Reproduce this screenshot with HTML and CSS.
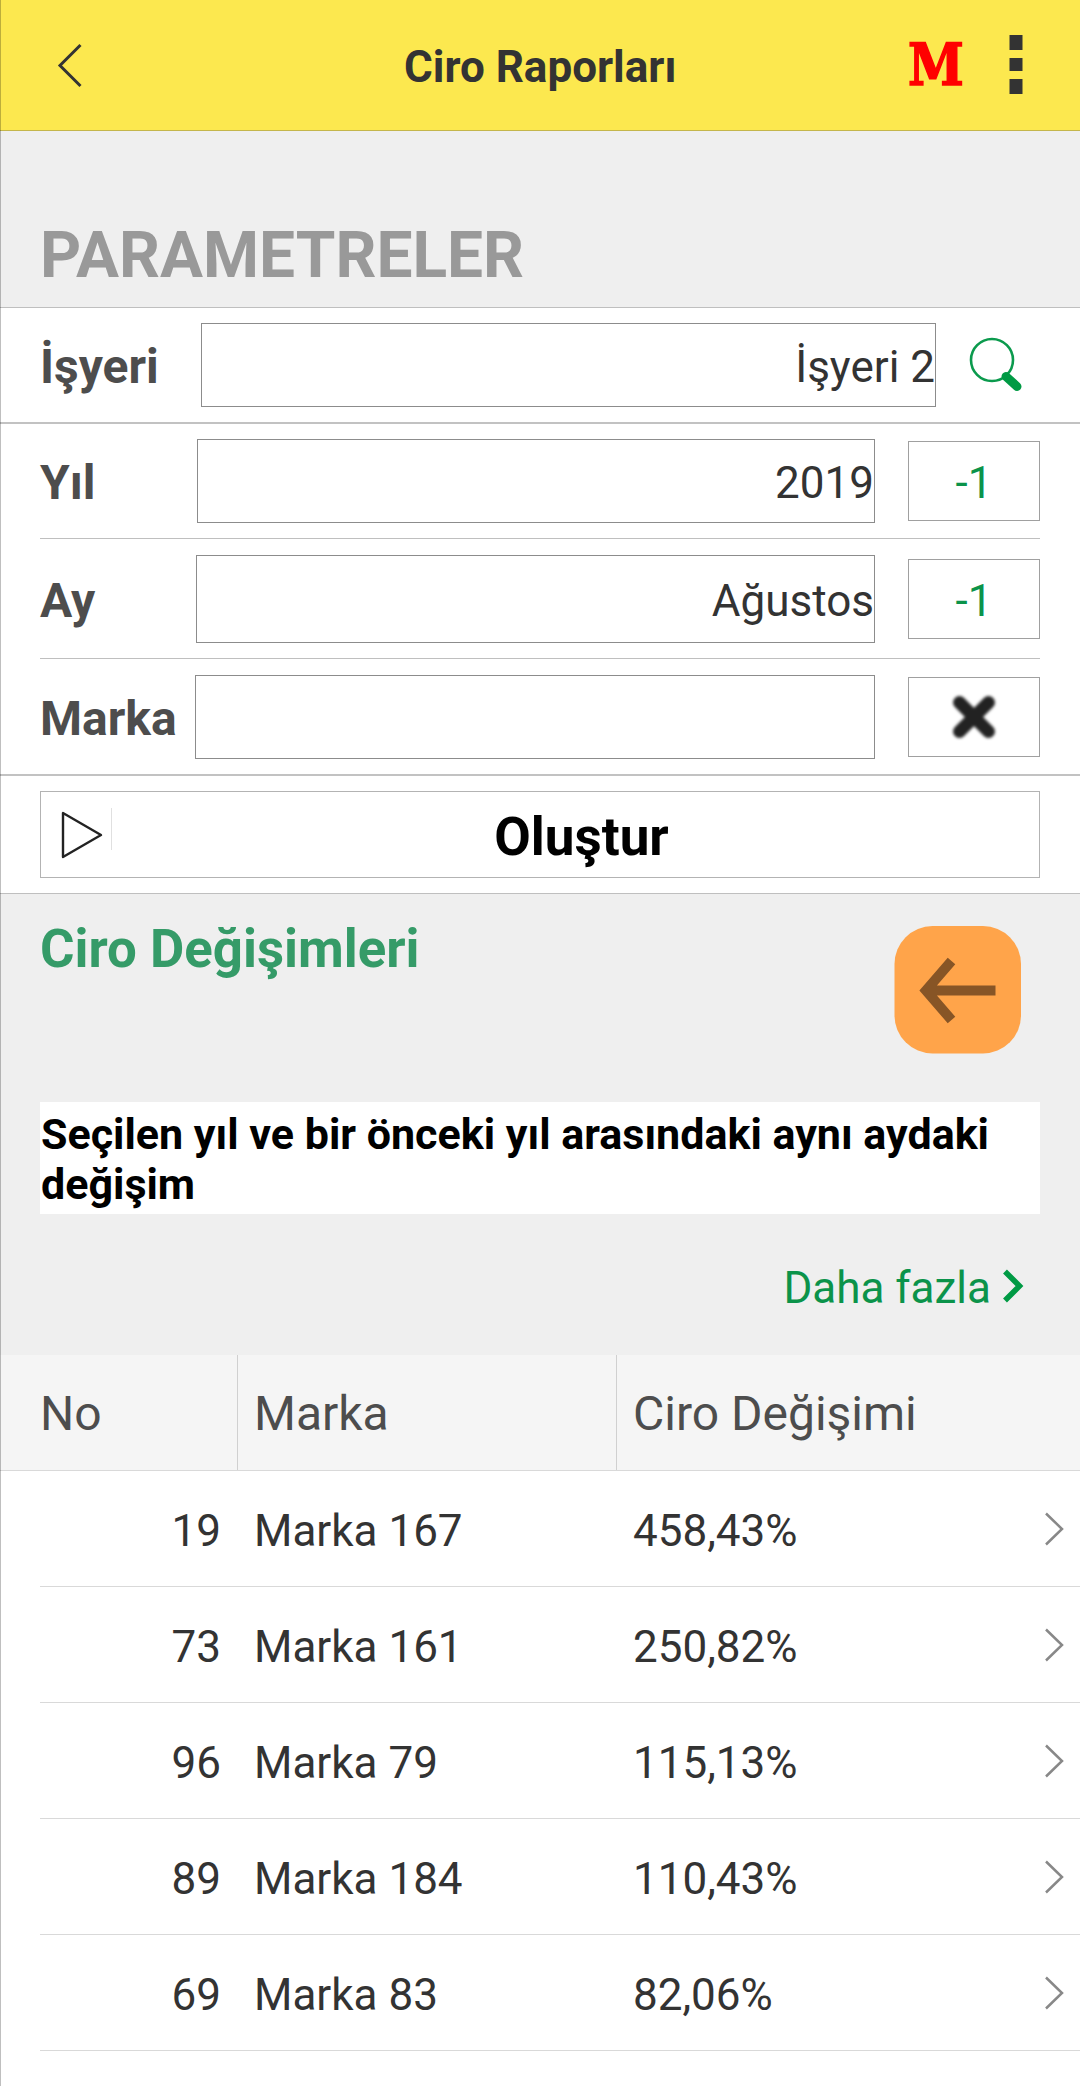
FILE: index.html
```html
<!DOCTYPE html>
<html lang="tr">
<head>
  <meta charset="UTF-8" />
  <meta name="viewport" content="width=device-width, initial-scale=1.0" />
  <title>Ciro Raporları</title>
  <link rel="stylesheet" href="styles.css">
</head>
<body>

  <header class="topbar">
    <svg class="back" width="28" height="48" viewBox="0 0 28 48">
      <path d="M25.5 4 L5 24.5 L25.5 45" fill="none" stroke="#333" stroke-width="3" />
    </svg>
    <h1 class="topbar-title">Ciro Raporları</h1>
    <span class="logo">M</span>
    <svg class="menu" width="14" height="60" viewBox="0 0 14 60" fill="#333">
      <rect x="0.5" y="0" width="13" height="15" />
      <rect x="0.5" y="23" width="13" height="13" />
      <rect x="0.5" y="44" width="13" height="15" />
    </svg>
  </header>

  <h2 class="group-title">PARAMETRELER</h2>

  <section class="params">
    <div class="row row-store">
      <span class="label">İşyeri</span>
      <span class="field">İşyeri 2</span>
      <svg class="search" width="56" height="56" viewBox="0 0 56 56">
        <circle cx="24" cy="23" r="21" fill="none" stroke="#0b9a4d" stroke-width="2.6" />
        <path d="M38 39.5 L49 49.5" stroke="#009a44" stroke-width="9" stroke-linecap="round" />
      </svg>
    </div>
    <div class="row row-year">
      <span class="label">Yıl</span>
      <span class="field">2019</span>
      <button class="side-btn">-1</button>
    </div>
    <div class="row row-month">
      <span class="label">Ay</span>
      <span class="field">Ağustos</span>
      <button class="side-btn">-1</button>
    </div>
    <div class="row row-brand">
      <span class="label">Marka</span>
      <span class="field"></span>
      <button class="side-btn">
        <svg class="clear" width="52" height="52" viewBox="0 0 52 52">
          <path d="M11.5 11.5 L40.5 40.5 M40.5 11.5 L11.5 40.5" stroke="#222" stroke-width="13" stroke-linecap="round" />
        </svg>
      </button>
    </div>
    <div class="submit">
      <button class="submit-btn">
        <svg class="play" width="60" height="56" viewBox="0 0 60 56">
          <path d="M13 6 L13 50 L51 28 Z" fill="none" stroke="#222" stroke-width="2.4" stroke-linejoin="round" />
        </svg>
        <span class="play-sep"></span>
        <span class="submit-text">Oluştur</span>
      </button>
    </div>
  </section>

  <section class="changes">
    <div class="changes-head">
      <h2 class="changes-title">Ciro Değişimleri</h2>
      <svg class="prev" width="128" height="128" viewBox="0 0 128 128">
        <rect x="0.5" y="0" width="126.5" height="127.5" rx="38" fill="#ffa44a" />
        <path d="M101.5 64.5 H32 M57.5 35 L32 64.5 L57.5 94" fill="none" stroke="#875526" stroke-width="10" />
      </svg>
    </div>
    <p class="note">Seçilen yıl ve bir önceki yıl arasındaki aynı aydaki değişim</p>
    <div class="more">
      <span>Daha fazla</span>
      <svg width="24" height="36" viewBox="0 0 24 36">
        <path d="M3 3.5 L17.5 18 L3 32.5" fill="none" stroke="#009a44" stroke-width="5.5" />
      </svg>
    </div>
  </section>

  <section class="table">
    <div class="thead">
      <span class="th">No</span>
      <span class="th">Marka</span>
      <span class="th">Ciro Değişimi</span>
    </div>
    <div class="trow">
      <span class="no">19</span>
      <span>Marka 167</span>
      <span>458,43%</span>
      <svg class="go" width="22" height="36" viewBox="0 0 22 36"><path d="M2 2.5 L18 18 L2 33.5" /></svg>
    </div>
    <div class="trow">
      <span class="no">73</span>
      <span>Marka 161</span>
      <span>250,82%</span>
      <svg class="go" width="22" height="36" viewBox="0 0 22 36"><path d="M2 2.5 L18 18 L2 33.5" /></svg>
    </div>
    <div class="trow">
      <span class="no">96</span>
      <span>Marka 79</span>
      <span>115,13%</span>
      <svg class="go" width="22" height="36" viewBox="0 0 22 36"><path d="M2 2.5 L18 18 L2 33.5" /></svg>
    </div>
    <div class="trow">
      <span class="no">89</span>
      <span>Marka 184</span>
      <span>110,43%</span>
      <svg class="go" width="22" height="36" viewBox="0 0 22 36"><path d="M2 2.5 L18 18 L2 33.5" /></svg>
    </div>
    <div class="trow">
      <span class="no">69</span>
      <span>Marka 83</span>
      <span>82,06%</span>
      <svg class="go" width="22" height="36" viewBox="0 0 22 36"><path d="M2 2.5 L18 18 L2 33.5" /></svg>
    </div>
  </section>

</body>
</html>
```

FILE: styles.css
```css
* {
  box-sizing: border-box;
}

body {
  position: relative;
  margin: 0;
  width: 1080px;
  height: 2086px;
  overflow: hidden;
  font-family: Roboto, sans-serif;
  font-size: 44px;
  color: #333;
  background: #fff;
}

/* thin line down the left edge of the screen */
body::before {
  content: "";
  position: absolute;
  top: 0;
  left: 0;
  width: 1px;
  height: 100%;
  background: rgba(0, 0, 0, 0.25);
}

h1,
h2,
p {
  margin: 0;
}

svg {
  display: block;
  flex: none;
}

button {
  padding: 0;
  font: inherit;
  color: inherit;
  background: #fff;
}

/* top bar */
.topbar {
  display: grid;
  grid-template-columns: 28px 1fr 54px 14px;
  align-items: center;
  height: 131px;
  padding: 0 57px 0 55px;
  background: #fce84f;
  border-bottom: 1px solid #c4b64b;
}

.topbar-title {
  padding: 3px 0 0 321px;
  font-size: 44px;
  font-weight: 700;
  line-height: 52px;
  white-space: nowrap;
}

.logo {
  width: 54px;
  margin-left: -47px;
  font-family: "DejaVu Serif", serif;
  font-size: 58px;
  font-weight: 700;
  line-height: 66px;
  color: #f00;
  transform: scaleX(0.87);
  transform-origin: left;
  -webkit-text-stroke: 1.6px #f00;
}

.group-title {
  height: 177px;
  padding: 87px 40px 0;
  font-size: 64px;
  font-weight: 700;
  line-height: 75px;
  color: #999;
  background: #efefef;
  border-bottom: 1px solid #bfbfbf;
}

/* parameters */
.row {
  display: flex;
  align-items: center;
  margin: 0 40px;
  border-bottom: 1px solid #bfbfbf;
}

.row-store,
.row-brand {
  margin: 0;
  padding: 0 40px;
  border-bottom: 2px solid #c2c2c2;
}

.row-store {
  height: 116px;
}

.row-year {
  height: 115px;
}

.row-month {
  height: 120px;
  padding-top: 1px;
}

.row-brand {
  height: 117px;
  padding-top: 1px;
}

.label {
  width: 155px;
  padding-top: 3px;
  font-size: 48px;
  font-weight: 700;
  line-height: 56px;
  color: #4d4d4d;
}

.row-store .label {
  width: 161px;
}

.row-year .label {
  width: 157px;
}

.row-month .label {
  width: 156px;
}

.field {
  flex: 1;
  height: 84px;
  padding-top: 2px;
  line-height: 82px;
  text-align: right;
  border: 1px solid #8c8c8c;
}

.row-month .field {
  height: 88px;
  line-height: 86px;
}

.search {
  margin: 0 16px 0 32px;
}

.side-btn {
  display: flex;
  align-items: center;
  justify-content: center;
  width: 132px;
  height: 80px;
  margin-left: 33px;
  padding-top: 4px;
  color: #0b934a;
  border: 1px solid #a0a0a0;
}

.clear {
  margin-top: -4px;
  filter: blur(1.4px);
}

.submit {
  height: 118px;
  padding: 15px 40px 0;
  border-bottom: 1px solid #bfbfbf;
}

.submit-btn {
  display: flex;
  align-items: center;
  width: 1000px;
  height: 87px;
  border: 1px solid #b3b3b3;
}

.play {
  margin-left: 9px;
}

.play-sep {
  width: 1px;
  height: 42px;
  margin: -12px 0 0 1px;
  background: #e0e0e0;
}

.submit-text {
  flex: 1;
  padding: 5px 0 0 12px;
  font-size: 53px;
  font-weight: 700;
  line-height: 60px;
  color: #000;
}

/* changes */
.changes {
  height: 461px;
  padding: 0 40px;
  background: #efefef;
}

.changes-head {
  display: flex;
  justify-content: space-between;
  height: 208px;
  padding: 32px 18px 0 0;
}

.changes-title {
  margin-top: -8px;
  font-size: 52.8px;
  font-weight: 700;
  line-height: 62px;
  color: #359b68;
}

.note {
  height: 112px;
  padding: 7px 1px 0;
  font-size: 43px;
  font-weight: 700;
  line-height: 50px;
  color: #000;
  background: #fff;
}

.more {
  display: flex;
  justify-content: flex-end;
  align-items: center;
  gap: 11px;
  margin-top: 48px;
  padding-right: 14px;
  line-height: 52px;
  color: #0b934a;
}

.more svg {
  margin-top: -4px;
}

/* table */
.thead,
.trow {
  display: grid;
  height: 116px;
  line-height: 116px;
}

.thead {
  grid-template-columns: 197px 379px 1fr;
  padding-left: 40px;
  font-size: 48px;
  line-height: 112px;
  color: #4d4d4d;
  background: #f5f5f5;
  border-bottom: 1px solid #d9d9d9;
}

.th {
  padding: 3px 0 0 16px;
  border-left: 1px solid #d0d0d0;
}

.th:first-child {
  padding-left: 0;
  border-left: 0;
}

.trow {
  grid-template-columns: 181px 379px 1fr 22px;
  margin-left: 40px;
  padding: 2px 14px 0 0;
  border-bottom: 1px solid #d9d9d9;
}

.trow span {
  padding-left: 33px;
}

.trow .no {
  padding-left: 0;
  text-align: right;
}

.go {
  margin-top: 38px;
  fill: none;
  stroke: #888;
  stroke-width: 2.5;
}
```
